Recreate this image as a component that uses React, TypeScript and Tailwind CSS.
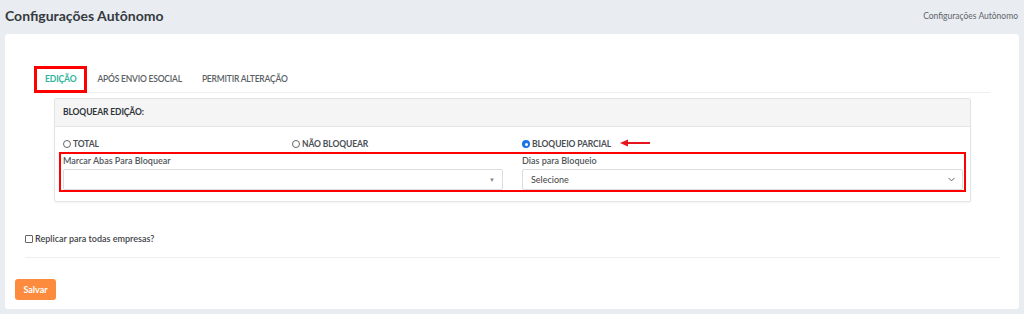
import { ChevronDown } from "lucide-react";

const tabs = ["EDIÇÃO", "APÓS ENVIO ESOCIAL", "PERMITIR ALTERAÇÃO"];

function Radio({ checked, label }: { checked?: boolean; label: string }) {
  return (
    <label className="flex items-center gap-[2px] text-[8.5px] font-bold tracking-[-0.1px] text-[#4a4f55]">
      {checked ? (
        <span className="flex h-[8px] w-[8px] items-center justify-center rounded-full bg-[#1a73e8]">
          <span className="h-[3px] w-[3px] rounded-full bg-white" />
        </span>
      ) : (
        <span className="h-[8px] w-[8px] rounded-full border border-[#666]" />
      )}
      {label}
    </label>
  );
}

export default function App() {
  return (
    <div className="h-[314px] w-[1024px] overflow-hidden bg-[#e9ecf1] font-['Lato',_'Liberation_Sans',_sans-serif]">
      <div className="flex h-[34px] items-start justify-between px-[5px] pt-[5px]">
        <h1 className="text-[14px] font-bold text-[#353a40]">Configurações Autônomo</h1>
        <span className="mt-[5px] pr-[1px] text-[8.5px] text-[#5f656b]">Configurações Autônomo</span>
      </div>

      <div className="mx-[5px] h-[275px] rounded-[3px] bg-white pt-[32px]">
        <div className="ml-[29px] mr-[29px] flex h-[27px] border-b border-[#eeeeee]">
          {tabs.map((tab, i) => (
            <div
              key={tab}
              className={
                i === 0
                  ? "flex h-[27px] items-center border-[3px] border-[#f00] px-[8px] text-[8.5px] font-bold tracking-[-0.1px] text-[#2db39a]"
                  : "flex h-[26px] items-center px-[10px] text-[8.5px] font-semibold tracking-[-0.2px] text-[#5a5f64]"
              }
            >
              {tab}
            </div>
          ))}
        </div>

        <div className="ml-[49px] mt-[5px] w-[917px] rounded-[2px] border border-[#e4e4e4] shadow-[0_1px_2px_rgba(0,0,0,0.05)]">
          <div className="flex h-[28px] items-center border-b border-[#e4e4e4] bg-[#f5f5f5] px-[8px] text-[8.5px] font-bold tracking-[-0.1px] text-[#2f3338]">
            BLOQUEAR EDIÇÃO:
          </div>
          <div className="px-[4px] pb-[9px] pt-[11px]">
            <div className="grid h-[11px] grid-cols-[229px_230px_1fr] px-[4px]">
              <Radio label="TOTAL" />
              <Radio label="NÃO BLOQUEAR" />
              <div className="flex items-center">
                <Radio checked label="BLOQUEIO PARCIAL" />
                <svg width="32" height="8" viewBox="0 0 32 8" className="ml-[8px] -mt-[3px]">
                  <path d="M1 4 L9 0.5 L9 3 L31 3 L31 5 L9 5 L9 7.5 Z" fill="#e8141b" />
                </svg>
              </div>
            </div>
            <div className="mt-[3px] grid grid-cols-[442px_1fr] border-2 border-[#f00] pl-[2px] pr-[1px] pt-[1px]">
              <div className="pr-[2px]">
                <div className="text-[9px] font-semibold leading-[11px] text-[#52575c]">Marcar Abas Para Bloquear</div>
                <div className="mt-[3px] flex h-[21px] items-center justify-end rounded-[2px] border border-[#dcdcdc] pr-[7px]">
                  <span className="text-[6px] text-[#888]">▼</span>
                </div>
              </div>
              <div className="pl-[17px]">
                <div className="text-[9px] font-semibold leading-[11px] text-[#52575c]">Dias para Bloqueio</div>
                <div className="mt-[3px] flex h-[21px] items-center justify-between rounded-[2px] border border-[#dcdcdc] pl-[8px] pr-[5px]">
                  <span className="text-[9px] text-[#444]">Selecione</span>
                  <ChevronDown size={11} strokeWidth={2} className="text-[#555]" />
                </div>
              </div>
            </div>
          </div>
        </div>

        <label className="ml-[20px] mt-[31px] flex items-center gap-[2px] text-[9px] font-semibold leading-[11px] text-[#3f4449]">
          <span className="h-[8px] w-[8px] rounded-[1px] border border-[#666]" />
          Replicar para todas empresas?
        </label>

        <div className="ml-[20px] mr-[19px] mt-[13px] border-t border-[#eeeeee]" />

        <button className="ml-[10px] mt-[21px] flex h-[21px] w-[41px] items-center justify-center rounded-[3px] bg-[#fd8b3d] text-[9px] font-bold text-white">
          Salvar
        </button>
      </div>
    </div>
  );
}
